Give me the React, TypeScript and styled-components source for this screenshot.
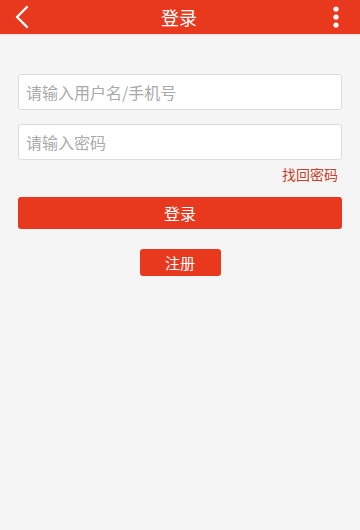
import React from 'react';
import styled, { createGlobalStyle } from 'styled-components';

const GlobalStyle = createGlobalStyle`
	html, body {
		margin: 0;
		padding: 0;
		background: #f5f5f5;
		font-family: "Noto Sans CJK SC", "Noto Sans", sans-serif;
	}
`;

const Page = styled.div`
	min-height: 530px;
	background: #f5f5f5;
	display: flex;
	flex-direction: column;
`;

const Header = styled.header`
	height: 34px;
	background: #e8391f;
	display: flex;
	align-items: center;
	justify-content: space-between;
	padding: 0 12px 0 10px;
	border-bottom: 2px solid #fbeae7;
`;

const IconButton = styled.button`
	width: 24px;
	height: 30px;
	padding: 0;
	border: none;
	background: none;
	display: flex;
	align-items: center;
	justify-content: center;
`;

const Title = styled.h1`
	margin: 0;
	font-size: 18px;
	font-weight: normal;
	color: #fff;
	line-height: 1;
`;

const Form = styled.div`
	display: flex;
	flex-direction: column;
	padding: 38px 18px 0 18px;
`;

const Input = styled.input<{ $gap?: number }>`
	box-sizing: border-box;
	width: 100%;
	height: 36px;
	margin-top: ${(p) => p.$gap ?? 0}px;
	padding: 0 7px;
	border: 1px solid #dcdcdc;
	border-radius: 3px;
	background: #fff;
	font-family: inherit;
	font-size: 16px;
	color: #333;
	outline: none;
	&::placeholder {
		color: #aaa;
	}
`;

const ForgotRow = styled.div`
	display: flex;
	justify-content: flex-end;
	padding: 4px 4px 0 0;
`;

const Forgot = styled.a`
	font-size: 14px;
	line-height: 20px;
	color: #c8412c;
	text-decoration: none;
`;

const LoginButton = styled.button`
	margin-top: 13px;
	height: 32px;
	border: none;
	border-radius: 3px;
	background: #e8391f;
	color: #fff;
	font-family: inherit;
	font-size: 16px;
`;

const RegisterRow = styled.div`
	display: flex;
	justify-content: center;
	margin-top: 20px;
`;

const RegisterButton = styled.button`
	width: 81px;
	height: 27px;
	border: none;
	border-radius: 3px;
	background: #e8391f;
	color: #fff;
	font-family: inherit;
	font-size: 15px;
	padding: 0;
`;

export default function App() {
	return (
		<>
			<GlobalStyle />
			<Page>
				<Header>
					<IconButton aria-label='back'>
						<svg width='16' height='24' viewBox='0 0 16 24'>
							<path d='M13 2 L3 12 L13 22' fill='none' stroke='#fff' strokeWidth='2.4' strokeLinecap='round' strokeLinejoin='round' />
						</svg>
					</IconButton>
					<Title>登录</Title>
					<IconButton aria-label='more'>
						<svg width='6' height='24' viewBox='0 0 6 24'>
							<circle cx='3' cy='4' r='2.6' fill='#fff' />
							<circle cx='3' cy='12' r='2.6' fill='#fff' />
							<circle cx='3' cy='20' r='2.6' fill='#fff' />
						</svg>
					</IconButton>
				</Header>
				<Form>
					<Input placeholder='请输入用户名/手机号' />
					<Input $gap={14} type='password' placeholder='请输入密码' />
					<ForgotRow>
						<Forgot href='#'>找回密码</Forgot>
					</ForgotRow>
					<LoginButton>登录</LoginButton>
					<RegisterRow>
						<RegisterButton>注册</RegisterButton>
					</RegisterRow>
				</Form>
			</Page>
		</>
	);
}
